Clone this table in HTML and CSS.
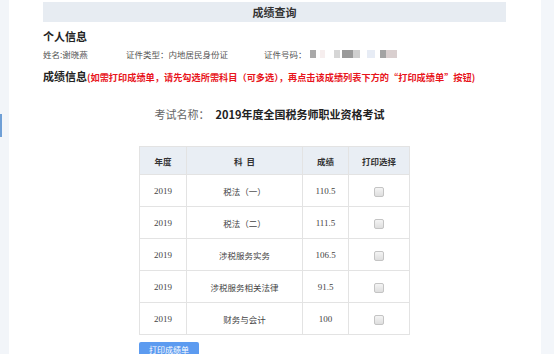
FILE: index.html
```html
<!DOCTYPE html>
<html lang="zh">
<head>
<meta charset="utf-8">
<link rel="stylesheet" href="styles.css">
</head>
<body>
<div class="page">
  <div class="side-left"><span class="marker"></span></div>
  <div class="main">
    <div class="head-bar">成绩查询</div>
    <div class="sec-title personal">个人信息</div>
    <div class="info-row">
      <span class="f-name">姓名:谢晓燕</span>
      <span class="f-type">证件类型：内地居民身份证</span>
      <span class="f-id">证件号码：</span>
      <span class="mask">
        <i class="b1"></i><i class="b2"></i><i class="b3"></i><i class="b4"></i><i class="b5"></i><i class="b6"></i><i class="b7"></i><i class="b8"></i>
      </span>
    </div>
    <div class="sec-title score-title">成绩信息<span class="note">(如需打印成绩单，请先勾选所需科目（可多选），再点击该成绩列表下方的“打印成绩单”按钮)</span></div>
    <div class="exam-name"><span class="label">考试名称：</span><span class="value">2019年度全国税务师职业资格考试</span></div>
    <div class="table-wrap">
      <table class="scores">
        <colgroup><col class="c1"><col class="c2"><col class="c3"><col class="c4"></colgroup>
        <thead>
          <tr><th>年度</th><th>科&nbsp;&nbsp;目</th><th>成绩</th><th>打印选择</th></tr>
        </thead>
        <tbody>
          <tr><td class="num">2019</td><td>税法（一）</td><td class="num">110.5</td><td><span class="chk"></span></td></tr>
          <tr><td class="num">2019</td><td>税法（二）</td><td class="num">111.5</td><td><span class="chk"></span></td></tr>
          <tr><td class="num">2019</td><td>涉税服务实务</td><td class="num">106.5</td><td><span class="chk"></span></td></tr>
          <tr><td class="num">2019</td><td>涉税服务相关法律</td><td class="num">91.5</td><td><span class="chk"></span></td></tr>
          <tr><td class="num">2019</td><td>财务与会计</td><td class="num">100</td><td><span class="chk"></span></td></tr>
        </tbody>
      </table>
      <button class="print-btn">打印成绩单</button>
    </div>
  </div>
  <div class="side-right"></div>
</div>
</body>
</html>
```

FILE: styles.css
```css
html, body {
  margin: 0;
  padding: 0;
  background: #ffffff;
  font-family: "Noto Sans CJK SC", "Noto Sans", sans-serif;
  color: #333;
}
.page {
  display: flex;
  height: 354px;
  overflow: hidden;
}
.side-left {
  width: 9px;
  background: #f2f5f9;
  position: relative;
  flex: none;
}
.marker {
  position: absolute;
  left: 0;
  top: 114px;
  width: 2px;
  height: 23px;
  background: #6f9fd6;
}
.side-right {
  width: 13px;
  background: #f3f6fa;
  flex: none;
}
.main {
  flex: 1;
  display: flex;
  flex-direction: column;
  padding-left: 34px;
}
.head-bar {
  margin-top: 2px;
  width: 463px;
  height: 20px;
  background: #e7ecf2;
  font-size: 11px;
  font-weight: bold;
  color: #333;
  text-align: center;
  line-height: 20px;
}
.sec-title {
  font-size: 11px;
  font-weight: bold;
  color: #222;
  line-height: 14px;
}
.personal {
  margin-top: 7px;
}
.info-row {
  margin-top: 5px;
  display: flex;
  align-items: center;
  font-size: 8.5px;
  color: #555;
  line-height: 12px;
  height: 12px;
}
.f-name { width: 83px; }
.f-type { width: 138px; }
.f-id { width: 46px; }
.mask {
  display: flex;
  height: 8px;
  align-items: stretch;
}
.mask i { display: block; }
.mask .b1 { width: 6px; background: #a9a9a9; margin-right: 4px; }
.mask .b2 { width: 5px; background: #f6eeee; margin-right: 9px; }
.mask .b3 { width: 6px; background: #d6d6d6; margin-right: 2px; }
.mask .b4 { width: 11px; background: #9a9a9a; }
.mask .b5 { width: 7px; background: #cfcfcf; margin-right: 7px; }
.mask .b6 { width: 8px; background: #e7ecf5; margin-right: 5px; }
.mask .b7 { width: 6px; background: #a3a3a3; }
.mask .b8 { width: 11px; background: #d9cfcf; }
.score-title {
  margin-top: 9px;
}
.note {
  font-size: 9.2px;
  color: #e8141b;
  font-weight: bold;
}
.exam-name {
  margin-top: 22px;
  width: 463px;
  text-align: center;
  padding-right: 10px;
  box-sizing: border-box;
  line-height: 16px;
  font-size: 11px;
}
.exam-name .label {
  color: #666;
  margin-right: 6px;
}
.exam-name .value {
  font-weight: bold;
  color: #222;
}
.table-wrap {
  margin-top: 24px;
  margin-left: 96px;
  display: flex;
  flex-direction: column;
  align-items: flex-start;
}
.scores {
  border-collapse: collapse;
  width: 270px;
  table-layout: fixed;
  font-size: 8.5px;
  color: #444;
}
.scores col.c1 { width: 47px; }
.scores col.c2 { width: 116px; }
.scores col.c3 { width: 46px; }
.scores col.c4 { width: 61px; }
.scores th, .scores td {
  border: 1px solid #e3e3e3;
  text-align: center;
  padding: 0;
}
.scores th {
  background: #e9eef4;
  height: 27px;
  font-weight: bold;
  font-size: 8.5px;
  color: #333;
}
.scores td {
  height: 31px;
}
.scores td.num {
  font-family: "Liberation Serif", "DejaVu Serif", serif;
  font-size: 9px;
}
.chk {
  display: inline-block;
  width: 8px;
  height: 8px;
  border: 1px solid #c4c4c4;
  border-radius: 2px;
  background: linear-gradient(#f4f4f4, #dedede);
  vertical-align: middle;
}
.print-btn {
  margin-top: 7px;
  width: 60px;
  height: 16px;
  border: none;
  border-radius: 2px;
  background: #5c9bf0;
  color: #fff;
  font-family: "Noto Sans CJK SC", sans-serif;
  font-size: 8px;
  padding: 0;
  line-height: 16px;
}
```
